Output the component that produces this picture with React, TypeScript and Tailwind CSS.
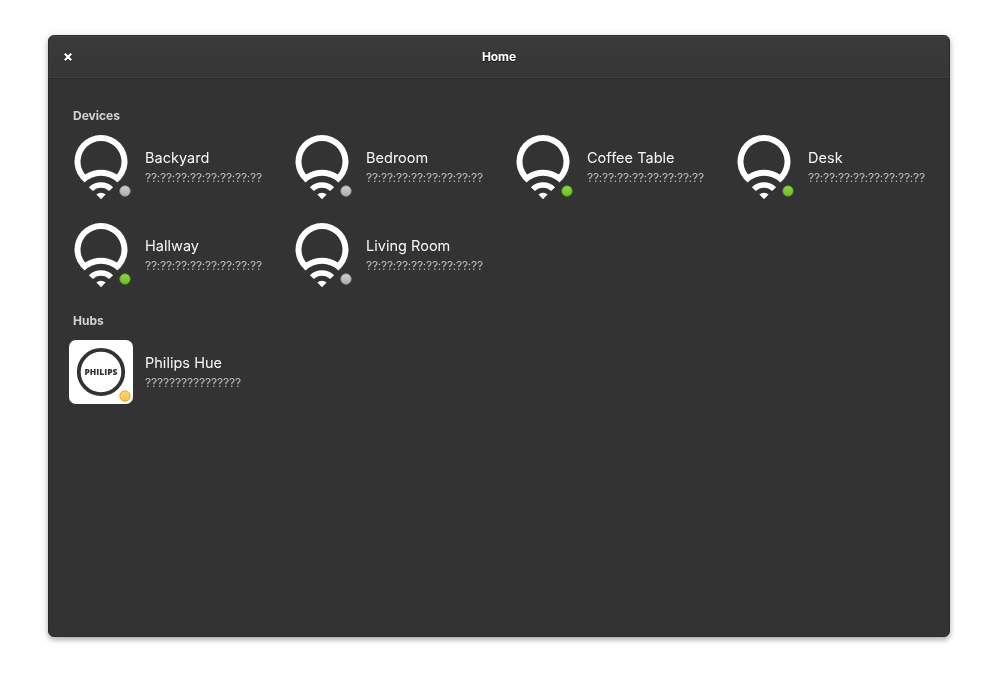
type Status = "off" | "on" | "wait";

const DOTS: Record<Status, [string, string, string]> = {
  off: ["#cfcfd1", "#acacaf", "#98989b"],
  on: ["#8fd93f", "#68bd22", "#57a51d"],
  wait: ["#ffd968", "#fbc43c", "#d9982c"],
};

function Dot({ status }: { status: Status }) {
  const [top, bottom, edge] = DOTS[status];
  return (
    <svg className="absolute left-[50px] top-[50px]" width="12" height="12" viewBox="0 0 12 12">
      <defs>
        <linearGradient id={`dot-${status}`} x1="0" y1="0" x2="0" y2="1">
          <stop offset="0" stopColor={top} />
          <stop offset="1" stopColor={bottom} />
        </linearGradient>
      </defs>
      <circle cx="6" cy="6" r="5.2" fill={`url(#dot-${status})`} stroke={edge} strokeWidth="0.8" />
    </svg>
  );
}

function Bulb() {
  return (
    <svg width="64" height="64" viewBox="0 0 64 64" fill="#fff">
      <path
        fillRule="evenodd"
        d="M15.65 47.4A26.5 26.5 0 1 1 48.35 47.4A23.3 23.3 0 0 0 15.65 47.4ZM16.07 39.4A29.3 29.3 0 0 1 47.93 39.4A20.5 20.5 0 1 0 16.07 39.4Z"
      />
      <path d="M19.9 52.2A17 17 0 0 1 44.1 52.2L40.1 56.1A11.4 11.4 0 0 0 23.9 56.1Z" />
      <path d="M27.4 59.6A6.5 6.5 0 0 1 36.6 59.6L32 64.2Z" />
    </svg>
  );
}

function HueLogo() {
  return (
    <svg width="64" height="64" viewBox="0 0 64 64">
      <rect width="64" height="64" rx="7" fill="#fff" />
      <circle cx="32" cy="32" r="22.2" fill="none" stroke="#333" strokeWidth="3.8" />
      <text
        x="32"
        y="34.8"
        textAnchor="middle"
        textLength="33"
        lengthAdjust="spacingAndGlyphs"
        fill="#333"
        className="font-['Open_Sans',sans-serif] text-[8px] font-extrabold"
      >
        PHILIPS
      </text>
    </svg>
  );
}

function Item({ name, id, status, hub }: { name: string; id: string; status: Status; hub?: boolean }) {
  return (
    <div className="flex h-16 items-center gap-3">
      <div className="relative h-16 w-16 shrink-0">
        {hub ? <HueLogo /> : <Bulb />}
        <Dot status={status} />
      </div>
      <div className="whitespace-nowrap pt-px">
        <div className="text-[14.5px] leading-5 tracking-[0.02px] text-[#f8f8f8]">{name}</div>
        <div className={`text-[12px] leading-5 text-[#bebebe] ${hub ? "tracking-[-0.14px]" : "tracking-[-0.24px]"}`}>
          {id}
        </div>
      </div>
    </div>
  );
}

const DEVICES: [string, Status][] = [
  ["Backyard", "off"],
  ["Bedroom", "off"],
  ["Coffee Table", "on"],
  ["Desk", "on"],
  ["Hallway", "on"],
  ["Living Room", "off"],
];

export default function App() {
  return (
    <div className="h-[698px] w-[998px] bg-white px-12 pt-[35px] font-['Inter',sans-serif]">
      <div className="flex h-[602px] w-[902px] flex-col overflow-hidden rounded-md border border-[#2a2a2a] bg-[#333] shadow-[0_3px_5px_rgba(0,0,0,0.28),0_0_12px_rgba(0,0,0,0.08)]">
        <header className="grid h-[43px] shrink-0 grid-cols-3 items-center border-b border-[#2a2a2a] bg-linear-to-b from-[#3a3a3a] to-[#363636] px-[15px] shadow-[inset_0_1px_0_#464646,inset_0_-1px_0_#3d3d3d]">
          <svg className="drop-shadow-[0_1px_0_rgba(0,0,0,0.6)]" width="8" height="8" viewBox="0 0 8 8" stroke="#fff" strokeWidth="2.2">
            <path d="M0.8 0.8L7.2 7.2M7.2 0.8L0.8 7.2" />
          </svg>
          <h1 className="text-center text-[12px] font-bold leading-4 tracking-[-0.1px] text-white [text-shadow:0_1px_1px_rgba(0,0,0,0.7)] will-change-transform">Home</h1>
        </header>
        <main className="pl-5 pt-[29px] will-change-transform">
          <h2 className="pl-1 text-[12px] font-bold leading-4 text-[#d4d4d4]">Devices</h2>
          <div className="mt-[11px] grid grid-cols-[repeat(4,221px)] gap-y-6">
            {DEVICES.map(([name, status]) => (
              <Item key={name} name={name} status={status} id="??:??:??:??:??:??:??:??" />
            ))}
          </div>
          <h2 className="mt-[26px] pl-1 text-[12px] font-bold leading-4 text-[#d4d4d4]">Hubs</h2>
          <div className="mt-[11px]">
            <Item hub name="Philips Hue" status="wait" id="????????????????" />
          </div>
        </main>
      </div>
    </div>
  );
}
